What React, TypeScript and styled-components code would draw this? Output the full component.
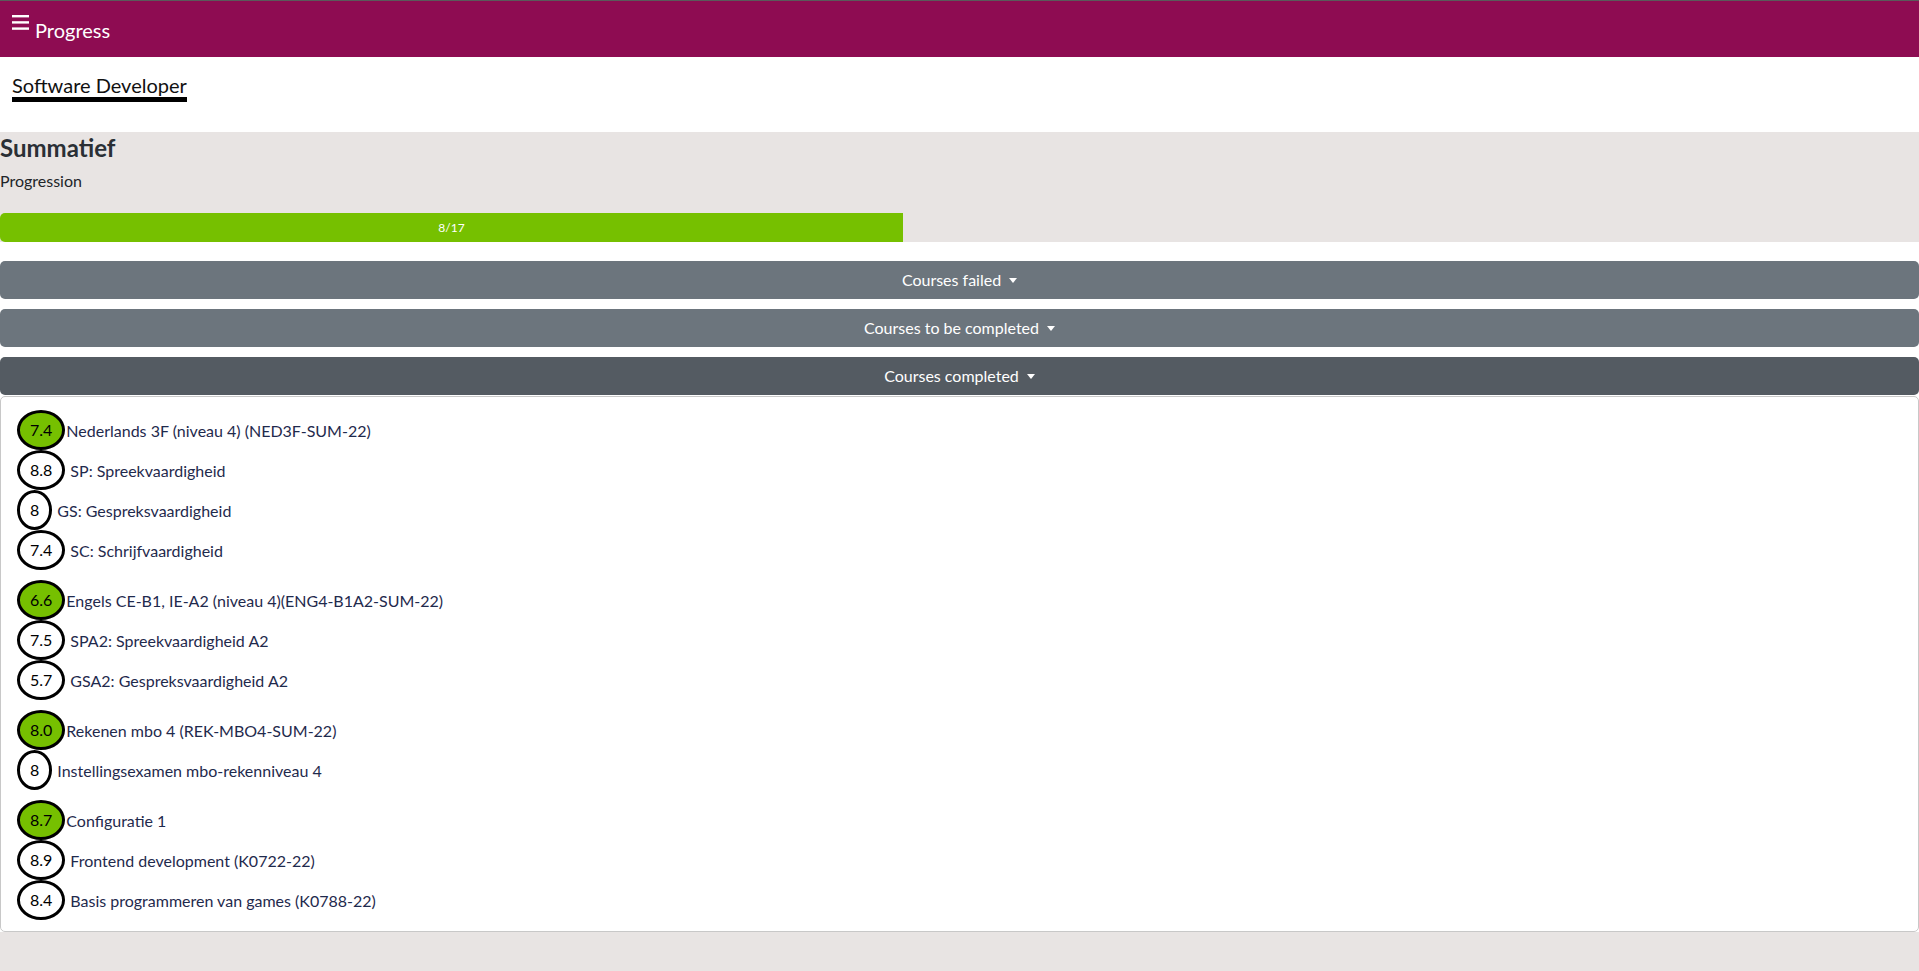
import React from "react";
import styled, { createGlobalStyle } from "styled-components";

const GlobalStyle = createGlobalStyle`
  html, body {
    margin: 0;
    padding: 0;
    background: #e8e4e3;
    font-family: Lato, "Open Sans", sans-serif;
    font-size: 16px;
    color: #212529;
  }
  * { box-sizing: border-box; }
`;

const Page = styled.div`
  display: flex;
  flex-direction: column;
`;

const Header = styled.header`
  height: 57px;
  border-top: 1px solid #5a5a5a;
  background: #8e0c52;
  display: flex;
  align-items: center;
  padding-left: 12px;
  gap: 6px;
  color: #fff;
`;

const MenuIcon = styled.svg`
  width: 17px;
  height: 15px;
  margin-top: -13px;
  flex: none;
`;

const HeaderTitle = styled.span`
  font-size: 20px;
  line-height: 24px;
  margin-top: 2px;
`;

const NavSection = styled.nav`
  height: 75px;
  background: #fff;
  padding: 16px 0 0 12px;
`;

const Tab = styled.span`
  display: inline-block;
  font-size: 20px;
  line-height: 24px;
  color: #111;
  border-bottom: 5px solid #000;
`;

const Summary = styled.section`
  background: #e8e4e3;
  padding-top: 1px;
  display: flex;
  flex-direction: column;
`;

const Title = styled.h4`
  margin: 0;
  font-size: 24px;
  font-weight: 700;
  line-height: 29px;
  color: #2a2f35;
`;

const Subtitle = styled.p`
  margin: 7px 0 20px;
  font-size: 16px;
  line-height: 24px;
`;

const Track = styled.div`
  height: 29px;
  background: #e8e4e3;
  border-radius: 5px;
  overflow: hidden;
  display: flex;
`;

const Fill = styled.div`
  background: #76c000;
  color: #fff;
  font-size: 12px;
  display: flex;
  align-items: center;
  justify-content: center;
`;

const Content = styled.main`
  background: #fff;
  padding-top: 19px;
  display: flex;
  flex-direction: column;
`;

const Toggle = styled.button<{ $active?: boolean }>`
  height: 38px;
  margin-bottom: ${(p) => (p.$active ? "1px" : "10px")};
  border: none;
  border-radius: 5px;
  background: ${(p) => (p.$active ? "#545b62" : "#6c757d")};
  color: #fff;
  font-family: inherit;
  font-size: 16px;
  line-height: 24px;
  display: flex;
  align-items: center;
  justify-content: center;
  &::after {
    content: "";
    display: inline-block;
    margin-left: 8px;
    border-top: 5px solid #fff;
    border-left: 4px solid transparent;
    border-right: 4px solid transparent;
  }
`;

const Card = styled.div`
  border: 1px solid #c8c8c8;
  border-radius: 5px;
  padding: 13px 16px 11px;
  display: flex;
  flex-direction: column;
  gap: 10px;
`;

const Group = styled.div`
  display: flex;
  flex-direction: column;
`;

const Row = styled.div`
  display: flex;
  align-items: center;
  height: 40px;
`;

const Grade = styled.span<{ $main?: boolean }>`
  display: inline-block;
  border: 3px solid #000;
  border-radius: 50%;
  padding: 5px 10px;
  line-height: 24px;
  font-size: 16px;
  color: #000;
  background: ${(p) => (p.$main ? "#76c000" : "#fff")};
`;

const Label = styled.span<{ $main?: boolean }>`
  margin-left: ${(p) => (p.$main ? "1px" : "5px")};
  font-size: 16px;
  color: #1f2a4d;
`;

type Item = { grade: string; name: string };
type Course = { grade: string; name: string; parts: Item[] };

const courses: Course[] = [
  {
    grade: "7.4",
    name: "Nederlands 3F (niveau 4) (NED3F-SUM-22)",
    parts: [
      { grade: "8.8", name: "SP: Spreekvaardigheid" },
      { grade: "8", name: "GS: Gespreksvaardigheid" },
      { grade: "7.4", name: "SC: Schrijfvaardigheid" },
    ],
  },
  {
    grade: "6.6",
    name: "Engels CE-B1, IE-A2 (niveau 4)(ENG4-B1A2-SUM-22)",
    parts: [
      { grade: "7.5", name: "SPA2: Spreekvaardigheid A2" },
      { grade: "5.7", name: "GSA2: Gespreksvaardigheid A2" },
    ],
  },
  {
    grade: "8.0",
    name: "Rekenen mbo 4 (REK-MBO4-SUM-22)",
    parts: [{ grade: "8", name: "Instellingsexamen mbo-rekenniveau 4" }],
  },
  {
    grade: "8.7",
    name: "Configuratie 1",
    parts: [
      { grade: "8.9", name: "Frontend development (K0722-22)" },
      { grade: "8.4", name: "Basis programmeren van games (K0788-22)" },
    ],
  },
];

export default function App() {
  const done = 8;
  const total = 17;
  return (
    <Page>
      <GlobalStyle />
      <Header>
        <MenuIcon viewBox="0 0 17 15">
          <rect x="0" y="0" width="17" height="2.4" fill="#fff" />
          <rect x="0" y="6.2" width="17" height="2.4" fill="#fff" />
          <rect x="0" y="12.4" width="17" height="2.4" fill="#fff" />
        </MenuIcon>
        <HeaderTitle>Progress</HeaderTitle>
      </Header>
      <NavSection>
        <Tab>Software Developer</Tab>
      </NavSection>
      <Summary>
        <Title>Summatief</Title>
        <Subtitle>Progression</Subtitle>
        <Track>
          <Fill style={{ width: `${(done / total) * 100}%` }}>
            {done}/{total}
          </Fill>
        </Track>
      </Summary>
      <Content>
        <Toggle>Courses failed</Toggle>
        <Toggle>Courses to be completed</Toggle>
        <Toggle $active>Courses completed</Toggle>
        <Card>
          {courses.map((c) => (
            <Group key={c.name}>
              <Row>
                <Grade $main>{c.grade}</Grade>
                <Label $main>{c.name}</Label>
              </Row>
              {c.parts.map((p) => (
                <Row key={p.name}>
                  <Grade>{p.grade}</Grade>
                  <Label>{p.name}</Label>
                </Row>
              ))}
            </Group>
          ))}
        </Card>
      </Content>
    </Page>
  );
}
